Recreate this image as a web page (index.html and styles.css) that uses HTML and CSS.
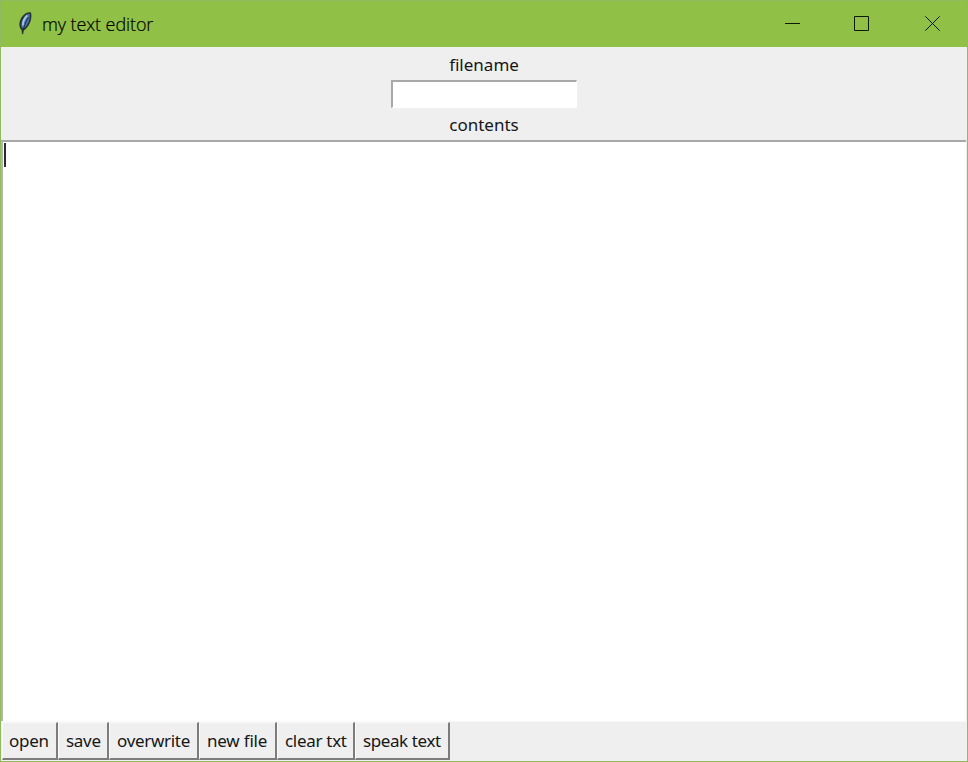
FILE: index.html
```html
<!DOCTYPE html>
<html lang="en">
<head>
<meta charset="utf-8">
<title>my text editor</title>
<link rel="stylesheet" href="styles.css">
</head>
<body>
<div class="window">
  <header class="titlebar">
    <svg class="feather" width="16" height="26" viewBox="0 0 16 26">
      <path d="M5 25 4.600 20C1 17 2 10 6 5.500 8.500 2.500 12 1.500 14 2.500 15.300 7.500 13.500 15 8 19.700L6.300 20.500Z" fill="#26362f"/>
      <path d="M4.800 18C3.500 14 5.500 8.500 8.500 5.500 10.200 3.900 11.800 3.500 12.700 4 13.200 9 11.500 14 7.500 18Z" fill="#4a74b4"/>
      <path d="M5.800 15.500C5.800 11.500 7.500 8 10.300 5.500" fill="none" stroke="#a9c8e6" stroke-width="1.800"/>
      <path d="M5.700 24C6 19 8.500 12 11.500 7" fill="none" stroke="#1d2b45" stroke-width="1"/>
    </svg>
    <h1 class="title">my text editor</h1>
    <div class="controls">
      <svg width="15" height="15" viewBox="0 0 15 15"><path d="M0 7.500h15"/></svg>
      <svg width="15" height="15" viewBox="0 0 15 15"><path d="M.5.5h14v14H.5z"/></svg>
      <svg class="close" width="15" height="15" viewBox="0 0 15 15"><path d="m.3.300 14.400 14.400m0-14.400L.3 14.700"/></svg>
    </div>
  </header>
  <section class="form">
    <label class="label filename-label" for="filename">filename</label>
    <input class="entry" id="filename" type="text">
    <label class="label contents-label">contents</label>
  </section>
  <main class="editor"><span class="caret"></span></main>
  <footer class="toolbar">
    <button class="btn open">open</button>
    <button class="btn save">save</button>
    <button class="btn overwrite">overwrite</button>
    <button class="btn new-file">new file</button>
    <button class="btn clear-txt">clear txt</button>
    <button class="btn speak-text">speak text</button>
  </footer>
</div>
</body>
</html>
```

FILE: styles.css
```css
* { box-sizing: border-box; }
body { margin: 0; }
.window {
  width: 968px;
  height: 762px;
  display: flex;
  flex-direction: column;
  border: 1px solid #91b960;
  background: #efefef;
  color: #161616;
  font-family: "Noto Sans", "Open Sans", sans-serif;
  font-size: 17px;
  overflow: hidden;
}
.titlebar {
  height: 46px;
  flex: none;
  display: flex;
  align-items: center;
  padding: 0 27px 2px 16px;
  background: #90c045;
}
.feather { flex: none; margin-top: -1px; }
.title {
  margin: 2px 0 0 9px;
  font: 300 18px/24px "Open Sans", sans-serif;
  letter-spacing: -0.1px;
  color: #000;
  -webkit-text-stroke: 0.2px #000;
  white-space: nowrap;
}
.controls { margin-left: auto; display: flex; gap: 54px; }
.controls svg { fill: none; stroke: #0c1a05; stroke-width: 1; }
.controls .close { margin-left: 2px; }
.form {
  height: 93px;
  flex: none;
  display: flex;
  flex-direction: column;
  align-items: center;
}
.label { height: 33px; line-height: 35px; }
.contents-label { height: 32px; line-height: 33px; }
.entry {
  width: 186px;
  height: 28px;
  flex: none;
  padding: 0 4px;
  border: 1px solid #fff;
  border-top: 2px solid #a8a8a8;
  border-left: 2px solid #a8a8a8;
  outline: 0;
  background: #fff;
}
.editor {
  flex: 1;
  margin-right: 1px;
  border-top: 2px solid #a8a8a8;
  border-left: 2px solid #b2b8a2;
  background: #fff;
}
.caret { display: block; width: 2px; height: 24px; margin: 1px 0 0 1px; background: #2b2b33; }
.toolbar { height: 40px; flex: none; display: flex; padding-left: 1px; border-top: 1px solid #f8f8f8; }
.btn {
  height: 38px;
  flex: none;
  padding: 0 0 0 6px;
  border: solid;
  border-width: 1px 2px 2px 1px;
  border-color: #fafafa #7c7c7c #7c7c7c #fafafa;
  background: #efefef;
  color: #161616;
  font: 17px/34px "Noto Sans", "Open Sans", sans-serif;
  letter-spacing: -0.3px;
  text-align: left;
  white-space: nowrap;
}
.open { width: 56px; }
.save { width: 51px; padding-left: 7px; }
.overwrite { width: 90px; padding-left: 7px; }
.new-file { width: 78px; padding-left: 7px; letter-spacing: -0.2px; }
.clear-txt { width: 78px; padding-left: 7px; }
.speak-text { width: 95px; padding-left: 7px; letter-spacing: -0.4px; }
```
